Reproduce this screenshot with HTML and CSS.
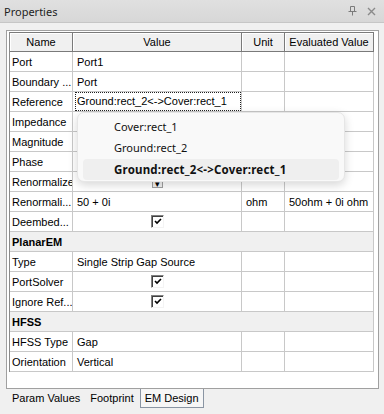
FILE: index.html
```html
<!DOCTYPE html>
<html lang="en">
<head>
    <meta charset="UTF-8">
    <title>Properties</title>
    <link rel="stylesheet" href="styles.css">
</head>
<body>

<div class="titlebar">
    <span class="title">Properties</span>
    <span class="tools">
        <svg width="9" height="10" viewBox="0 0 9 10"><path d="M2.5 0.5h4v5h-4z M0.5 5.5h8 M4.5 5.5v4" fill="none" stroke="#7b7b7b" stroke-width="1"/></svg>
        <svg width="9" height="9" viewBox="0 0 9 9"><path d="M1 1l7 7M8 1l-7 7" stroke="#8a8a8a" stroke-width="1.4"/></svg>
    </span>
</div>

<div class="panel">
    <div class="frame">
        <table class="grid">
            <thead>
                <tr>
                    <th class="c-name">Name</th>
                    <th class="c-value">Value</th>
                    <th class="c-unit">Unit</th>
                    <th class="c-eval">Evaluated Value</th>
                </tr>
            </thead>
            <tbody>
                <tr><td>Port</td><td>Port1</td><td></td><td></td></tr>
                <tr><td>Boundary ...</td><td>Port</td><td></td><td></td></tr>
                <tr><td>Reference</td><td class="focus-cell"><span class="focus">Ground:rect_2&lt;-&gt;Cover:rect_1</span></td><td></td><td></td></tr>
                <tr><td>Impedance</td><td></td><td></td><td></td></tr>
                <tr><td>Magnitude</td><td></td><td></td><td></td></tr>
                <tr><td>Phase</td><td></td><td></td><td></td></tr>
                <tr><td>Renormalize</td><td class="center"><span class="combo">&#9662;</span></td><td></td><td></td></tr>
                <tr><td>Renormali...</td><td>50 + 0i</td><td>ohm</td><td>50ohm + 0i ohm</td></tr>
                <tr><td>Deembed...</td><td class="center"><span class="check"></span></td><td></td><td></td></tr>
                <tr class="group"><td colspan="4">PlanarEM</td></tr>
                <tr><td>Type</td><td>Single Strip Gap Source</td><td></td><td></td></tr>
                <tr><td>PortSolver</td><td class="center"><span class="check"></span></td><td></td><td></td></tr>
                <tr><td>Ignore Ref...</td><td class="center"><span class="check"></span></td><td></td><td></td></tr>
                <tr class="group"><td colspan="4">HFSS</td></tr>
                <tr><td>HFSS Type</td><td>Gap</td><td></td><td></td></tr>
                <tr><td>Orientation</td><td>Vertical</td><td></td><td></td></tr>
            </tbody>
        </table>

        <!-- open list of the Reference cell -->
        <div class="dropdown">
            <div class="option">Cover:rect_1</div>
            <div class="option">Ground:rect_2</div>
            <div class="option selected">Ground:rect_2&lt;-&gt;Cover:rect_1</div>
        </div>
    </div>

    <div class="tabs">
        <span class="tab">Param Values</span>
        <span class="tab">Footprint</span>
        <span class="tab active">EM Design</span>
    </div>
</div>

</body>
</html>
```

FILE: styles.css
```css
body {
    margin: 0;
    background-color: #f0f0f0;
    font-family: 'Liberation Sans', Arial, sans-serif;
    font-size: 11px;
    color: #000;
    width: 384px;
    height: 414px;
    overflow: hidden;
}

.titlebar {
    height: 22px;
    display: flex;
    align-items: center;
    justify-content: space-between;
    padding: 0 8px 0 4px;
    background: linear-gradient(#e0e0e0, #d7d7d7);
    border-bottom: 1px solid #c6c6c6;
}

.title {
    font-family: 'Noto Sans', sans-serif;
    font-size: 11px;
    color: #1e1e1e;
}

.tools {
    display: flex;
    align-items: center;
    gap: 10px;
}

.panel {
    padding: 7px 5px 0 6px;
}

.frame {
    position: relative;
    height: 359px;
    box-sizing: border-box;
    border: 1px solid #a0a0a0;
    background-color: #fff;
    padding: 1px 0 0 2px;
}

.grid {
    border-collapse: separate;
    border-spacing: 0;
    table-layout: fixed;
    width: 365px;
    border-top: 1px solid #7a7a7a;
    border-left: 1px solid #8a8a8a;
}

.grid th {
    box-sizing: border-box;
    height: 19px;
    padding: 0;
    font-weight: normal;
    text-align: center;
    background-color: #f0f0f0;
    border-right: 1px solid #7a7a7a;
    border-bottom: 1px solid #7a7a7a;
    box-shadow: inset 1px 1px 0 #fff;
}

.c-name { width: 63px; }
.c-value { width: 169px; }
.c-unit { width: 43px; }
.c-eval { width: 89px; }

.grid td {
    box-sizing: border-box;
    height: 20px;
    padding: 0 3px 0 2px;
    white-space: nowrap;
    overflow: hidden;
    border-right: 1px solid #c8c8c8;
    border-bottom: 1px solid #c8c8c8;
}

.grid td + td {
    padding-left: 4px;
}

.grid td.center {
    text-align: center;
    padding: 0;
}

.grid td.focus-cell {
    padding: 0 0 0 2px;
}

.focus {
    display: block;
    height: 17px;
    line-height: 17px;
    padding-left: 1px;
    border: 1px dotted #222;
    overflow: hidden;
}

.group td {
    background-color: #f0f0f0;
    font-weight: bold;
    border-right-color: #c8c8c8;
}

.check {
    display: inline-block;
    vertical-align: middle;
    width: 13px;
    height: 13px;
    box-sizing: border-box;
    border: 1px solid;
    border-color: #808080 #f4f4f4 #f4f4f4 #808080;
    box-shadow: inset 1px 1px 0 #404040;
    background: #fff url("data:image/svg+xml,%3Csvg xmlns='http://www.w3.org/2000/svg' width='11' height='11'%3E%3Cpath d='M3 5l2 2 4-4' fill='none' stroke='%23000' stroke-width='1.6'/%3E%3C/svg%3E") no-repeat center;
}

.combo {
    display: inline-block;
    vertical-align: middle;
    width: 11px;
    height: 13px;
    box-sizing: border-box;
    border: 1px solid #a0a0a0;
    background-color: #f0f0f0;
    font-size: 9px;
    line-height: 16px;
}

.dropdown {
    position: absolute;
    left: 70px;
    top: 81px;
    width: 268px;
    height: 70px;
    box-sizing: border-box;
    padding: 3px 5px;
    background-color: #f9f9f9;
    border: 1px solid #e6e6e6;
    border-radius: 7px;
    box-shadow: 0 3px 10px rgba(0, 0, 0, 0.16);
    font-family: 'Noto Sans', sans-serif;
    font-size: 11px;
    color: #111;
}

.option {
    height: 21px;
    line-height: 21px;
    padding-left: 31px;
    border-radius: 4px;
}

.option.selected {
    margin-top: 1px;
    font-size: 11.5px;
    font-weight: bold;
    letter-spacing: 0.2px;
    background-color: #efefef;
}

.tabs {
    display: flex;
    padding-left: 2px;
    font-size: 11px;
}

.tab {
    height: 18px;
    line-height: 18px;
    padding: 0 4px;
}

.tab + .tab {
    margin-left: 2px;
}

.tab.active {
    background-color: #f6f6f6;
    border: 1px solid #8a95a3;
    border-top: none;
}
```
